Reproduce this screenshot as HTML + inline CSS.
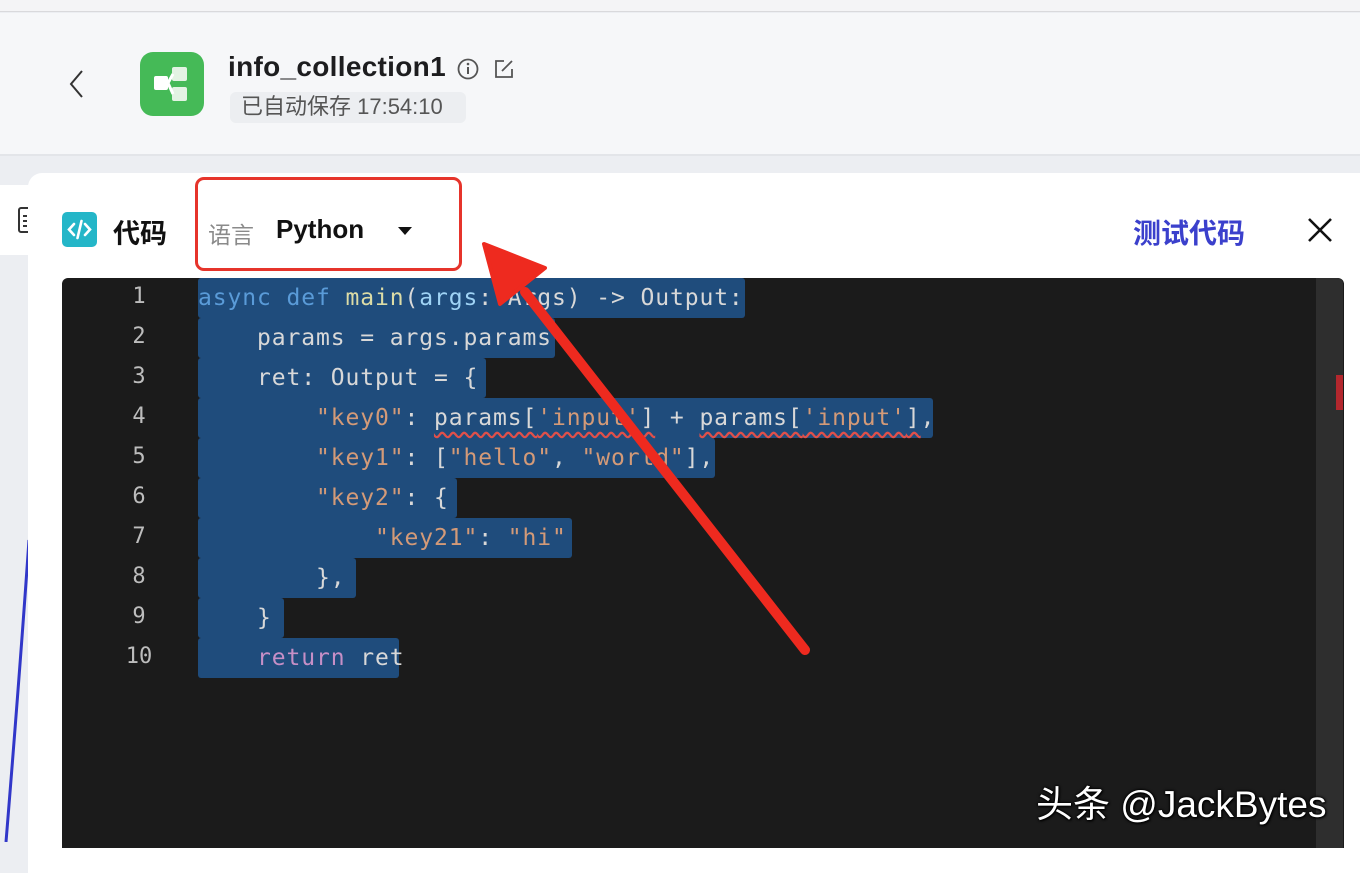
<!DOCTYPE html>
<html><head><meta charset="utf-8"><style>
*{margin:0;padding:0;box-sizing:border-box}
body{width:1360px;height:842px;overflow:hidden;background:#eceef2;font-family:"Liberation Sans","Noto Sans CJK SC",sans-serif;position:relative}
.abs{position:absolute}
.code{font-family:"DejaVu Sans Mono","Liberation Mono",monospace;font-size:23px;letter-spacing:0.9px;color:#d8d8d8;white-space:pre}
.ln{position:absolute;left:114px;width:50px;text-align:center;font-family:"DejaVu Sans Mono",monospace;font-size:22px;color:#bdbdbd}
.sel{position:absolute;left:198px;height:40px;background:#1f4c7c;border-radius:3px}
.k{color:#5a9bd8}.f{color:#dcdca6}.v{color:#9fd3f5}.s{color:#d39a78}.r{color:#c68fc6}
.sq{text-decoration:underline wavy #e0504a;text-underline-offset:6px}
</style></head><body>
<div class="abs" style="left:0;top:0;width:1360px;height:12px;background:#f4f4f6;border-bottom:1px solid #d9d9dc"></div>
<div class="abs" style="left:0;top:13px;width:1360px;height:143px;background:#f6f7f9;border-bottom:2px solid #e3e5e9"></div>
<svg class="abs" style="left:64px;top:68px" width="24" height="32"><path d="M18 3 L7 16 L18 29" stroke="#333" stroke-width="2" fill="none"/></svg>
<div class="abs" style="left:140px;top:52px;width:64px;height:64px;background:#45ba57;border-radius:13px"></div>
<svg class="abs" style="left:140px;top:52px" width="64" height="64"><rect x="14" y="24" width="14" height="14" rx="2" fill="#fff"/><rect x="32" y="15" width="15" height="14" rx="2" fill="#e3f3e3"/><rect x="32" y="35" width="15" height="14" rx="2" fill="#e3f3e3"/><path d="M28 31 L33 22 M28 31 L33 42" stroke="#fff" stroke-width="3"/></svg>
<div class="abs" style="left:228px;top:51px;font-size:28px;font-weight:bold;color:#1d1d1f;letter-spacing:0.3px">info_collection1</div>
<svg class="abs" style="left:456px;top:57px" width="24" height="24"><circle cx="12" cy="12" r="9.5" stroke="#555" stroke-width="1.8" fill="none"/><path d="M12 10v7" stroke="#555" stroke-width="2"/><circle cx="12" cy="7" r="1.3" fill="#555"/></svg>
<svg class="abs" style="left:492px;top:57px" width="24" height="24"><path d="M12 4H4v16h16v-8" stroke="#555" stroke-width="1.8" fill="none"/><path d="M10 14 L20 4" stroke="#555" stroke-width="1.8"/></svg>
<div class="abs" style="left:230px;top:92px;width:236px;height:31px;background:#eceef1;border-radius:6px"></div>
<div class="abs" style="left:241px;top:92px;font-size:22px;color:#555;line-height:30px">已自动保存 17:54:10</div>
<div class="abs" style="left:0;top:185px;width:30px;height:70px;background:#fff"></div>
<svg class="abs" style="left:16px;top:205px" width="14" height="30"><rect x="3" y="3" width="12" height="24" rx="2" stroke="#333" stroke-width="2" fill="none"/><path d="M7 11h4M7 16h4M7 21h4" stroke="#333" stroke-width="2"/></svg>
<svg class="abs" style="left:0;top:520px" width="40" height="322"><path d="M29 20 Q20 150 6 322" stroke="#3137c9" stroke-width="3" fill="none"/></svg>
<div class="abs" style="left:28px;top:173px;width:1332px;height:700px;background:#fff;border-radius:14px 0 0 0"></div>
<div class="abs" style="left:62px;top:212px;width:35px;height:35px;background:#24b6c8;border-radius:5px"></div>
<svg class="abs" style="left:62px;top:212px" width="35" height="35"><path d="M12 12 L7 17.5 L12 23 M23 12 L28 17.5 L23 23 M19.5 9 L15.5 26" stroke="#fff" stroke-width="2.6" fill="none" stroke-linecap="round"/></svg>
<div class="abs" style="left:113px;top:212px;font-size:27px;font-weight:bold;color:#111">代码</div>
<div class="abs" style="left:208px;top:216px;font-size:23px;color:#8a8a8a">语言</div>
<div class="abs" style="left:276px;top:214px;font-size:26px;font-weight:bold;color:#111">Python</div>
<svg class="abs" style="left:397px;top:225px" width="16" height="12"><path d="M1 2h14L8 10z" fill="#111"/></svg>
<div class="abs" style="left:195px;top:177px;width:267px;height:94px;border:3px solid #e6342b;border-radius:9px"></div>
<div class="abs" style="left:1133px;top:212px;font-size:28px;font-weight:bold;color:#3b40cc">测试代码</div>
<svg class="abs" style="left:1306px;top:216px" width="28" height="28"><path d="M3 3L25 25M25 3L3 25" stroke="#111" stroke-width="2.6"/></svg>
<div class="abs" style="left:62px;top:278px;width:1282px;height:570px;background:#1b1b1b;border-radius:6px 6px 0 0"></div>
<div class="abs" style="left:1316px;top:278px;width:27px;height:570px;background:#2e2e2e;border-radius:0 6px 0 0"></div>
<div class="abs" style="left:1336px;top:375px;width:7px;height:35px;background:#b3272d"></div>
<div class="sel" style="top:278px;width:547px"></div>
<div class="sel" style="top:318px;width:357px"></div>
<div class="sel" style="top:358px;width:288px"></div>
<div class="sel" style="top:398px;width:735px"></div>
<div class="sel" style="top:438px;width:517px"></div>
<div class="sel" style="top:478px;width:259px"></div>
<div class="sel" style="top:518px;width:374px"></div>
<div class="sel" style="top:558px;width:158px"></div>
<div class="sel" style="top:598px;width:86px"></div>
<div class="sel" style="top:638px;width:201px"></div>
<div class="ln" style="top:284px">1</div><div class="ln" style="top:324px">2</div><div class="ln" style="top:364px">3</div><div class="ln" style="top:404px">4</div><div class="ln" style="top:444px">5</div><div class="ln" style="top:484px">6</div><div class="ln" style="top:524px">7</div><div class="ln" style="top:564px">8</div><div class="ln" style="top:604px">9</div><div class="ln" style="top:644px">10</div>
<div class="abs code" style="left:198px;top:278px;line-height:40px"><span class="k">async def</span> <span class="f">main</span>(<span class="v">args</span>: Args) -&gt; Output:
    params = args.params
    ret: Output = {
        <span class="s">"key0"</span>: <span class="sq">params[<span class="s">'input'</span>]</span> + <span class="sq">params[<span class="s">'input'</span>]</span>,
        <span class="s">"key1"</span>: [<span class="s">"hello"</span>, <span class="s">"world"</span>],
        <span class="s">"key2"</span>: {
            <span class="s">"key21"</span>: <span class="s">"hi"</span>
        },
    }
    <span class="r">return</span> ret</div>
<svg class="abs" style="left:0;top:0" width="1360" height="842"><path d="M805 650 L525 292" stroke="#ee2a1f" stroke-width="10" stroke-linecap="round"/><path d="M484 244 L545 268 L500 304 Z" fill="#ee2a1f" stroke="#ee2a1f" stroke-width="4" stroke-linejoin="round"/></svg>
<div class="abs" style="left:1036px;top:774px;font-size:37px;color:#fff;text-shadow:0 0 2px #000,0 0 3px #000,1px 1px 2px #000">头条 @JackBytes</div>
</body></html>
